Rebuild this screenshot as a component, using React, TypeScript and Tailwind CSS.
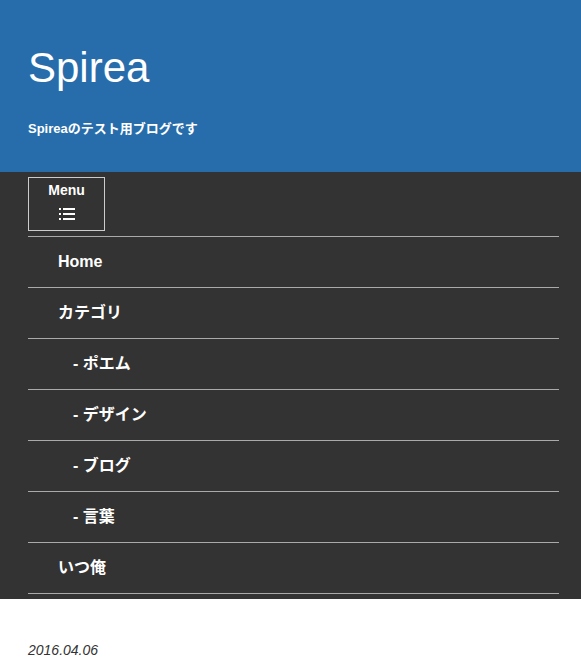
const items: { label: string; sub?: boolean }[] = [
  { label: "Home" },
  { label: "カテゴリ" },
  { label: "- ポエム", sub: true },
  { label: "- デザイン", sub: true },
  { label: "- ブログ", sub: true },
  { label: "- 言葉", sub: true },
  { label: "いつ俺" },
];

function ListIcon() {
  return (
    <svg width="16" height="12" viewBox="0 0 16 12" fill="currentColor">
      <rect x="0" y="0" width="2" height="2" />
      <rect x="4" y="0" width="12" height="2" />
      <rect x="0" y="5" width="2" height="2" />
      <rect x="4" y="5" width="12" height="2" />
      <rect x="0" y="10" width="2" height="2" />
      <rect x="4" y="10" width="12" height="2" />
    </svg>
  );
}

export default function App() {
  return (
    <div className="min-h-screen bg-white" style={{ fontFamily: '"Liberation Sans", "Noto Sans CJK JP", sans-serif' }}>
      {/* Header */}
      <header className="h-[172px] bg-[#286dab] px-[28px] pt-[41px] text-white">
        <h1 className="text-[42px] leading-[54px] font-normal">Spirea</h1>
        <p className="mt-[25px] text-[13px] font-bold leading-[18px]">Spireaのテスト用ブログです</p>
      </header>

      {/* Nav */}
      <nav className="bg-[#333333] pl-[28px] pr-[22px] pt-[5px] pb-[5px]">
        <button className="flex h-[54px] w-[77px] flex-col items-center justify-start gap-[10px] border border-[#cccccc] pt-[4px] text-white">
          <span className="text-[14px] font-bold leading-[16px]">Menu</span>
          <ListIcon />
        </button>
        <ul className="mt-[5px] border-b border-[#aaaaaa]">
          {items.map((it) => (
            <li
              key={it.label}
              className={`flex h-[51px] items-center border-t border-[#aaaaaa] text-[16px] font-bold text-white ${it.sub ? "pl-[45px]" : "pl-[30px]"}`}
            >
              {it.label}
            </li>
          ))}
        </ul>
      </nav>

      {/* Content */}
      <main className="px-[28px] pt-[41px]">
        <p className="text-[14px] italic text-[#333333]">2016.04.06</p>
      </main>
    </div>
  );
}
